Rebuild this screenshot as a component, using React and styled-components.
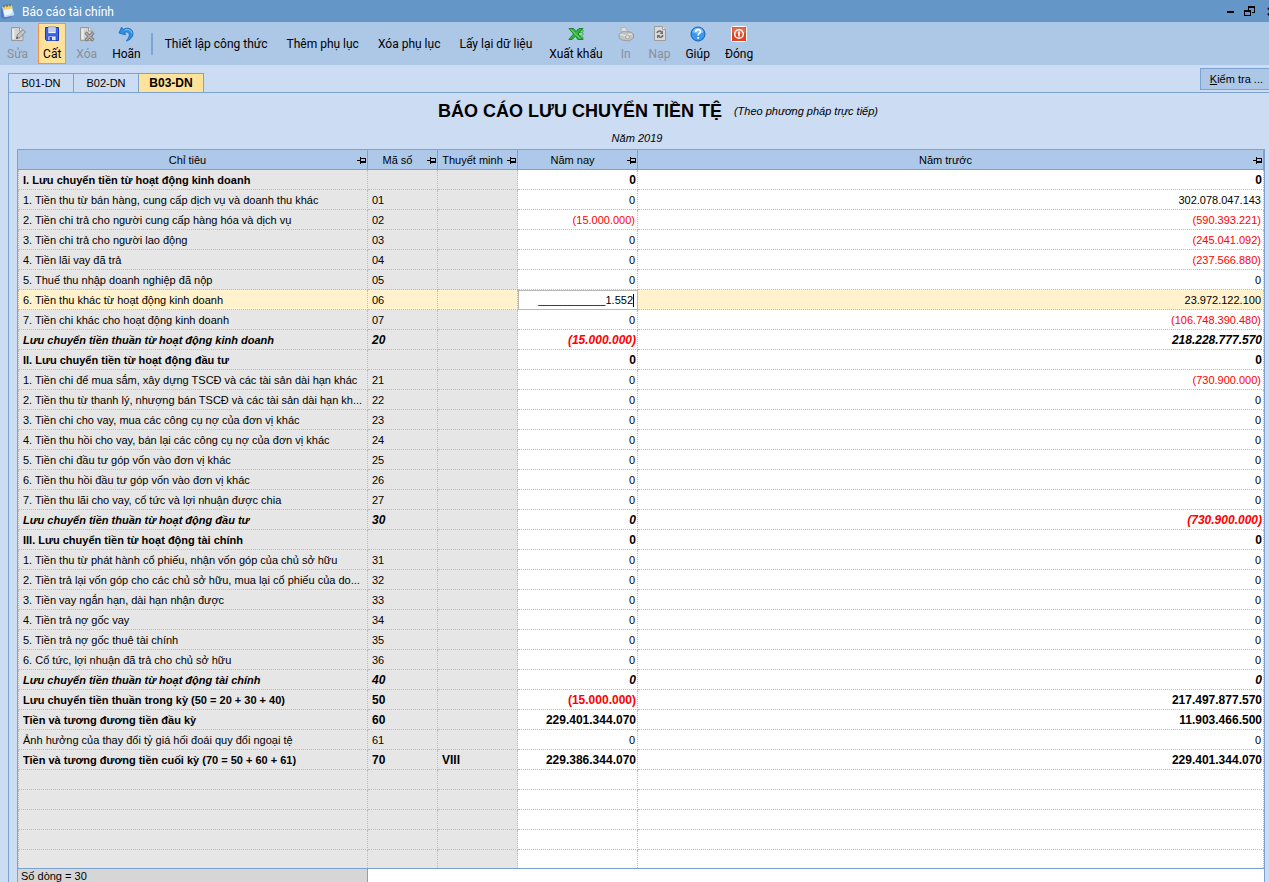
import React, { useState } from 'react';
import styled, { createGlobalStyle, css } from 'styled-components';

const uiFont = 'Roboto, "Noto Sans", sans-serif';
const gridFont = '"Liberation Sans", Arial, sans-serif';

const rows = [
    { name: 'I. Lưu chuyển tiền từ hoạt động kinh doanh', now: '0', prev: '0', kind: 'bold' },
    { name: '1. Tiền thu từ bán hàng, cung cấp dịch vụ và doanh thu khác', code: '01', now: '0', prev: '302.078.047.143' },
    { name: '2. Tiền chi trả cho người cung cấp hàng hóa và dịch vụ', code: '02', now: '(15.000.000)', prev: '(590.393.221)' },
    { name: '3. Tiền chi trả cho người lao động', code: '03', now: '0', prev: '(245.041.092)' },
    { name: '4. Tiền lãi vay đã trả', code: '04', now: '0', prev: '(237.566.880)' },
    { name: '5. Thuế thu nhập doanh nghiệp đã nộp', code: '05', now: '0', prev: '0' },
    { name: '6. Tiền thu khác từ hoạt động kinh doanh', code: '06', now: '___________1.552', prev: '23.972.122.100', editing: true },
    { name: '7. Tiền chi khác cho hoạt động kinh doanh', code: '07', now: '0', prev: '(106.748.390.480)' },
    { name: 'Lưu chuyển tiền thuần từ hoạt động kinh doanh', code: '20', now: '(15.000.000)', prev: '218.228.777.570', kind: 'italic' },
    { name: 'II. Lưu chuyển tiền từ hoạt động đầu tư', now: '0', prev: '0', kind: 'bold' },
    { name: '1. Tiền chi để mua sắm, xây dựng TSCĐ và các tài sản dài hạn khác', code: '21', now: '0', prev: '(730.900.000)' },
    { name: '2. Tiền thu từ thanh lý, nhượng bán TSCĐ và các tài sản dài hạn kh...', code: '22', now: '0', prev: '0' },
    { name: '3. Tiền chi cho vay, mua các công cụ nợ của đơn vị khác', code: '23', now: '0', prev: '0' },
    { name: '4. Tiền thu hồi cho vay, bán lại các công cụ nợ của đơn vị khác', code: '24', now: '0', prev: '0' },
    { name: '5. Tiền chi đầu tư góp vốn vào đơn vị khác', code: '25', now: '0', prev: '0' },
    { name: '6. Tiền thu hồi đầu tư góp vốn vào đơn vị khác', code: '26', now: '0', prev: '0' },
    { name: '7. Tiền thu lãi cho vay, cổ tức và lợi nhuận được chia', code: '27', now: '0', prev: '0' },
    { name: 'Lưu chuyển tiền thuần từ hoạt động đầu tư', code: '30', now: '0', prev: '(730.900.000)', kind: 'italic' },
    { name: 'III. Lưu chuyển tiền từ hoạt động tài chính', now: '0', prev: '0', kind: 'bold' },
    { name: '1. Tiền thu từ phát hành cổ phiếu, nhận vốn góp của chủ sở hữu', code: '31', now: '0', prev: '0' },
    { name: '2. Tiền trả lại vốn góp cho các chủ sở hữu, mua lại cổ phiếu của do...', code: '32', now: '0', prev: '0' },
    { name: '3. Tiền vay ngắn hạn, dài hạn nhận được', code: '33', now: '0', prev: '0' },
    { name: '4. Tiền trả nợ gốc vay', code: '34', now: '0', prev: '0' },
    { name: '5. Tiền trả nợ gốc thuê tài chính', code: '35', now: '0', prev: '0' },
    { name: '6. Cổ tức, lợi nhuận đã trả cho chủ sở hữu', code: '36', now: '0', prev: '0' },
    { name: 'Lưu chuyển tiền thuần từ hoạt động tài chính', code: '40', now: '0', prev: '0', kind: 'italic' },
    { name: 'Lưu chuyển tiền thuần trong kỳ (50 = 20 + 30 + 40)', code: '50', now: '(15.000.000)', prev: '217.497.877.570', kind: 'bold' },
    { name: 'Tiền và tương đương tiền đầu kỳ', code: '60', now: '229.401.344.070', prev: '11.903.466.500', kind: 'bold' },
    { name: 'Ảnh hưởng của thay đổi tỷ giá hối đoái quy đổi ngoại tệ', code: '61', now: '0', prev: '0' },
    { name: 'Tiền và tương đương tiền cuối kỳ (70 = 50 + 60 + 61)', code: '70', note: 'VIII', now: '229.386.344.070', prev: '229.401.344.070', kind: 'bold' },
];

const columns = ['Chỉ tiêu', 'Mã số', 'Thuyết minh', 'Năm nay', 'Năm trước'];
const tabs = ['B01-DN', 'B02-DN', 'B03-DN'];
const blankRows = [1, 2, 3, 4, 5];

const isNegative = (value) => value.startsWith('(');

const AppIcon = () => (
    <svg width="16" height="16" viewBox="0 0 16 16" aria-hidden="true">
        <path d="M1 5l2-1 9 10-8 2-3-2z" fill="#5d6fd0" />
        <path d="M2.500 4l9-1.500 2.500 9.500-9.500 2z" fill="#eaf6fb" stroke="#a9cfe6" strokeWidth=".6" />
        <path d="M2.500 4l9-1.500.8 3-9 1.500z" fill="#f3d266" />
        <path d="M6 12c4 0 6-1 7-4l1 4-9 2z" fill="#b8dcf0" />
        <path d="M4 4.500V2M7 4V1.500M10 3.500V1" stroke="#6c5a38" strokeWidth="1.200" />
    </svg>
)

const GreyPage = () => (
    <path d="M1.500 1.500h8.500l3 3v10H1.500z" fill="#d3d3d3" stroke="#999" />
)

const EditIcon = () => (
    <svg width="16" height="16" viewBox="0 0 16 16" aria-hidden="true">
        <GreyPage />
        <path d="M3.500 3v10" stroke="#ececec" strokeWidth="2" />
        <path d="M9.500 1.500v3.500h3.500" fill="#eee" stroke="#999" />
        <path d="M6.500 12.500l1-4 5.500-5 2.500 2.500-5.500 5.500z" fill="#c4c4c4" stroke="#858585" />
        <path d="M6 13l.8-2.500 1.700 1.700z" fill="#555" />
    </svg>
)

const SaveIcon = () => (
    <svg width="16" height="16" viewBox="0 0 16 16" aria-hidden="true">
        <path d="M1.500 1.500h13v13h-12l-1-1z" fill="#3c68f0" stroke="#1837b4" />
        <path d="M4 1h8v6.500H4z" fill="#f4f6ff" stroke="#2346c8" strokeWidth=".6" />
        <path d="M5 3h6M5 5h6" stroke="#8fa4dc" />
        <path d="M4 10h8v4.500H4z" fill="#dfe4f4" stroke="#1837b4" strokeWidth=".6" />
        <path d="M5.500 11h2.500v3.500H5.500z" fill="#2b4cc4" />
    </svg>
)

const DeleteIcon = () => (
    <svg width="16" height="16" viewBox="0 0 16 16" aria-hidden="true">
        <GreyPage />
        <path d="M3.500 3v10" stroke="#ececec" strokeWidth="2" />
        <path d="M9.500 1.500v3.500h3.500" fill="#eee" stroke="#999" />
        <path d="M6.500 6.500l8 8M14.500 6.500l-8 8" stroke="#7e7e7e" strokeWidth="3.200" />
        <path d="M7 7l7 7M14 7l-7 7" stroke="#b4b4b4" strokeWidth="1.200" />
    </svg>
)

const UndoIcon = () => (
    <svg width="16" height="16" viewBox="0 0 16 16" aria-hidden="true">
        <path d="M3.500 1.200L1 7l6.500 1.800-.9-2.300c2.700-1.100 4.900.2 4.700 2.700-.2 2-1.500 3.500-3 5.800 3.700-1 6.700-3.800 6.700-7.300C15 3 10 .8 5.500 3.300z" fill="#2c91e0" stroke="#1767b4" strokeWidth=".8" />
        <path d="M6.500 4.300c3.500-1.600 7.200 0 7.500 3.200" fill="none" stroke="#83caff" />
    </svg>
)

const ExcelIcon = () => (
    <svg width="16" height="16" viewBox="0 0 16 16" aria-hidden="true">
        <path d="M9 4h6v2h-4zM10 7h5v2h-5zM9 11h6v2H9z" fill="#eaf8e8" stroke="#249b32" strokeWidth=".8" />
        <path d="M1 2.500h4.500L8 5.500l3-3h4L10 8l5 5.500h-4.800L7.600 10l-3.400 3.500H.8L5.600 8z" fill="#2db63b" stroke="#087518" strokeWidth=".8" />
        <path d="M3 3.500l9 9" stroke="#87e17b" />
    </svg>
)

const PrintIcon = () => (
    <svg width="16" height="16" viewBox="0 0 16 16" aria-hidden="true">
        <path d="M2.500 2l5-.8 2.500 5-5.500 2z" fill="#dedede" stroke="#a4a4a4" strokeWidth=".7" />
        <path d="M1 8.500l4-3 7 .5 3.500 2v4l-4.500 3-7-1-3-2z" fill="#c4c4c4" stroke="#929292" strokeWidth=".8" />
        <path d="M2 8.500l5 1 7-1.500" fill="none" stroke="#ededed" />
        <circle cx="9.500" cy="11" r="2" fill="#dedede" stroke="#989898" strokeWidth=".7" />
    </svg>
)

const ReloadIcon = () => (
    <svg width="16" height="16" viewBox="0 0 16 16" aria-hidden="true">
        <path d="M2.500 .5h8l3 3v11h-11z" fill="#dadada" stroke="#9c9c9c" />
        <path d="M10.500 .5v3h3" fill="#f2f2f2" stroke="#9c9c9c" />
        <path d="M5 7c.5-2 3-2.500 4.500-1M11 9c-.5 2.500-3 3-4.500 1.500" fill="none" stroke="#6c6c6c" strokeWidth="1.500" />
        <path d="M11 4.500V8H7.500zM5 12.500V9h3.500z" fill="#6c6c6c" />
    </svg>
)

const HelpIcon = () => (
    <svg width="16" height="16" viewBox="0 0 16 16" aria-hidden="true">
        <circle cx="8" cy="8" r="7" fill="#3b96f0" stroke="#1460b4" />
        <path d="M2.500 6a5.700 5.700 0 0 1 11 0c-2 2-8 2.500-11 0z" fill="#79bdf9" />
        <path d="M5.700 6c0-3 4.800-3 4.800-.3C10.500 7.500 8.200 7.400 8.200 9.500" fill="none" stroke="#fff" strokeWidth="1.700" />
        <path d="M7.300 11h1.800v1.800H7.300z" fill="#fff" />
    </svg>
)

const PowerIcon = () => (
    <svg width="16" height="16" viewBox="0 0 16 16" aria-hidden="true">
        <rect x=".5" y=".5" width="15" height="15" rx="1" fill="#dc4524" stroke="#fff" />
        <path d="M1.500 1.500h13v5c-4 2-9 2-13 0z" fill="#ea6a4a" />
        <circle cx="8" cy="8" r="4.300" fill="none" stroke="#fff" strokeWidth="1.500" />
        <path d="M8 5.500v5" stroke="#fff" strokeWidth="1.700" />
    </svg>
)

const PinIcon = () => (
    <svg width="9" height="8" viewBox="0 0 9 8" shapeRendering="crispEdges" aria-hidden="true">
        <path d="M0 4h3v1H0zM3 1h1v7H3zM4 2h5v5H4zM4 3v2h4V3z" fillRule="evenodd" />
    </svg>
)

const iconActions = [
    { label: 'Sửa', Icon: EditIcon, disabled: true },
    { label: 'Cất', Icon: SaveIcon, active: true },
    { label: 'Xóa', Icon: DeleteIcon, disabled: true },
    { label: 'Hoãn', Icon: UndoIcon },
];
const textActions = ['Thiết lập công thức', 'Thêm phụ lục', 'Xóa phụ lục', 'Lấy lại dữ liệu'];
const moreActions = [
    { label: 'Xuất khẩu', Icon: ExcelIcon },
    { label: 'In', Icon: PrintIcon, disabled: true },
    { label: 'Nạp', Icon: ReloadIcon, disabled: true },
    { label: 'Giúp', Icon: HelpIcon },
    { label: 'Đóng', Icon: PowerIcon },
];

function IconAction({ label, Icon, disabled, active }) {
    return (
        <ToolButton type="button" disabled={disabled} $active={active}>
            <Icon />
            {label}
        </ToolButton>
    )
}

function ReportRow({ row }) {
    const [value, setValue] = useState(row.now);

    return (
        <Row $kind={row.kind} $selected={row.editing}>
            <Cell>{row.name}</Cell>
            <CodeCell>{row.code}</CodeCell>
            <CodeCell>{row.note}</CodeCell>
            {row.editing ? (
                <EditCell>
                    <Editor>
                        <AmountInput
                            aria-label={row.name}
                            value={value}
                            onChange={(e) => setValue(e.target.value)}
                        />
                        <Caret />
                    </Editor>
                </EditCell>
            ) : (
                <Amount $negative={isNegative(row.now)}>{row.now}</Amount>
            )}
            <Amount $negative={isNegative(row.prev)}>{row.prev}</Amount>
        </Row>
    )
}

function App() {
    const [tab, setTab] = useState('B03-DN');

    return (
        <Window>
            <GlobalStyle />
            <TitleBar>
                <AppIcon />
                <WindowTitle>Báo cáo tài chính</WindowTitle>
                <WindowControls>
                    <ControlButton type="button" aria-label="Minimize">
                        <svg width="11" height="11" viewBox="0 0 11 11" shapeRendering="crispEdges">
                            <path d="M2 5h7v2H2z" />
                        </svg>
                    </ControlButton>
                    <ControlButton type="button" aria-label="Restore">
                        <svg width="11" height="11" viewBox="0 0 11 11" shapeRendering="crispEdges">
                            <path d="M4 0h7v7H8V6h2V2H5v2H4zM0 4h7v6H0zM1 6v3h5V6z" fillRule="evenodd" />
                        </svg>
                    </ControlButton>
                    <CloseButton type="button" aria-label="Close">
                        <svg width="11" height="11" viewBox="0 0 11 11">
                            <path d="M2 2l7 7M9 2l-7 7" stroke="#000" strokeWidth="2" />
                        </svg>
                    </CloseButton>
                </WindowControls>
            </TitleBar>

            <Toolbar>
                {iconActions.map((action) => <IconAction key={action.label} {...action} />)}
                <Separator />
                {textActions.map((label) => <TextButton key={label} type="button">{label}</TextButton>)}
                {moreActions.map((action) => <IconAction key={action.label} {...action} />)}
            </Toolbar>

            <TabStrip>
                <Tabs role="tablist">
                    {tabs.map((name) => (
                        <Tab
                            key={name}
                            type="button"
                            role="tab"
                            aria-selected={tab === name}
                            $active={tab === name}
                            onClick={() => setTab(name)}
                        >
                            {name}
                        </Tab>
                    ))}
                </Tabs>
                <CheckButton type="button"><u>K</u>iểm tra ...</CheckButton>
            </TabStrip>

            <Panel>
                <Heading>
                    <HeadingLine>
                        <Title>BÁO CÁO LƯU CHUYỂN TIỀN TỆ</Title>
                        <Method>(Theo phương pháp trực tiếp)</Method>
                    </HeadingLine>
                    <Year>Năm 2019</Year>
                </Heading>

                <Grid>
                    <GridBody>
                        <Table>
                            <colgroup>
                                <Col $width="350px" />
                                <Col $width="70px" />
                                <Col $width="80px" />
                                <Col $width="120px" />
                                <Col />
                            </colgroup>
                            <thead>
                                <tr>
                                    {columns.map((name) => (
                                        <HeadCell key={name} scope="col">
                                            <HeadContent>
                                                <HeadLabel>{name}</HeadLabel>
                                                <PinIcon />
                                            </HeadContent>
                                        </HeadCell>
                                    ))}
                                </tr>
                            </thead>
                            <tbody>
                                {rows.map((row) => <ReportRow key={row.name} row={row} />)}
                                {blankRows.map((n) => (
                                    <Row key={n}>
                                        <Cell />
                                        <Cell />
                                        <Cell />
                                        <Amount />
                                        <Amount />
                                    </Row>
                                ))}
                            </tbody>
                        </Table>
                    </GridBody>
                    <GridFooter>
                        <RowCount>Số dòng = {rows.length}</RowCount>
                    </GridFooter>
                </Grid>
            </Panel>
        </Window>
    )
}

export default App

const GlobalStyle = createGlobalStyle`
* {
    box-sizing: border-box;
}
body {
    margin: 0;
    overflow: hidden;
    color: #000;
    background: #ccdcf2;
}
button {
    margin: 0;
    color: inherit;
    cursor: pointer;
    white-space: nowrap;
}
`

const Window = styled.div`
display: flex;
flex-direction: column;
height: 100vh;
overflow: hidden;
font: 11px ${gridFont};
`

const TitleBar = styled.header`
display: flex;
flex: none;
align-items: center;
height: 22px;
background: #6496c8;
overflow: hidden;
`

const WindowTitle = styled.div`
flex: 1;
padding: 2px 0 0 6px;
color: #fff;
font: 12px/20px ${uiFont};
`

const WindowControls = styled.div`
display: flex;
gap: 8px;
margin-right: -8px;
`

const ControlButton = styled.button`
display: flex;
padding: 0;
border: 0;
background: none;
`

const CloseButton = styled(ControlButton)`
padding-left: 3px;
`

const Toolbar = styled.nav`
display: flex;
flex: none;
align-items: center;
gap: 5px;
height: 43px;
padding: 0 2px;
background: #adc7e7;
font: 12px/18px ${uiFont};
`

const ToolButton = styled.button`
display: flex;
flex-direction: column;
align-items: center;
justify-content: space-between;
height: 41px;
padding: 2px 4px 0;
border: 1px solid ${(props) => (props.$active ? '#f0924c' : 'transparent')};
background: ${(props) => (props.$active ? '#ffe29a' : 'none')};
font: inherit;

&:disabled {
    color: #8a8f98;
}
`

const TextButton = styled.button`
padding: 0 7px;
border: 0;
background: none;
font: inherit;
`

const Separator = styled.div`
width: 2px;
height: 22px;
background: #7aa6d8;
`

const TabStrip = styled.div`
display: flex;
flex: none;
align-items: flex-end;
justify-content: space-between;
height: 27px;
padding-left: 8px;
`

const Tabs = styled.div`
display: flex;
border-left: 1px solid #7ba2d0;
`

const Tab = styled.button`
width: 65px;
height: 19px;
padding: 0;
border: solid #7ba2d0;
border-width: 1px 1px 0 0;
background: ${(props) => (props.$active ? '#ffe29a' : '#ccdcf2')};
font: ${(props) => (props.$active ? 'bold 12px' : '11px')} ${gridFont};
`

const CheckButton = styled.button`
height: 22px;
margin-bottom: 2px;
padding: 0 6px 0 9px;
border: 1px solid #7ba2d0;
border-right: 0;
background: #adc7e7;
font: 11px ${gridFont};
`

const Panel = styled.main`
display: flex;
flex: 1;
flex-direction: column;
min-height: 0;
margin-left: 8px;
padding: 0 4px 0 8px;
border: solid #7ba2d0;
border-width: 1px 0 0 1px;
`

const Heading = styled.div`
flex: none;
height: 56px;
padding: 7px 8px 0 0;
text-align: center;
`

const HeadingLine = styled.div`
display: flex;
align-items: center;
justify-content: center;
gap: 12px;
padding-left: 42px;
`

const Title = styled.h1`
margin: 0;
font-size: 18px;
line-height: 22px;
`

const Method = styled.span`
font-size: 11px;
font-style: italic;
`

const Year = styled.div`
font-style: italic;
line-height: 16px;
margin-top: 8px;
`

const Grid = styled.section`
display: flex;
flex: 1;
flex-direction: column;
min-height: 0;
border: solid #7ba2d0;
border-width: 1px 1px 0 1px;
`

const GridBody = styled.div`
flex: 1;
min-height: 0;
overflow: hidden;
background: #fff;
`

const Table = styled.table`
width: 100%;
border-spacing: 0;
table-layout: fixed;
`

const Col = styled.col`
width: ${(props) => props.$width || 'auto'};
`

const HeadCell = styled.th`
height: 20px;
padding: 0 1px 0 0;
border-right: 1px solid #7ba2d0;
border-bottom: 1px solid #7ba2d0;
background: #adc8e8;
font-size: 11px;
font-weight: normal;
`

const HeadContent = styled.div`
display: flex;
align-items: center;
`

const HeadLabel = styled.span`
flex: 1;
white-space: nowrap;
`

const cellBase = css`
height: 20px;
padding: 2px 2px 0 4px;
border-right: 1px dotted #bcbcbc;
border-bottom: 1px dotted #bcbcbc;
line-height: 17px;
white-space: nowrap;
`

const Cell = styled.td`
${cellBase}
background: #e6e6e6;
overflow: hidden;
text-overflow: ellipsis;

&:first-child {
    border-left: 1px dotted #bcbcbc;
}
`

const CodeCell = styled(Cell)``

const Amount = styled.td`
${cellBase}
text-align: right;
color: ${(props) => (props.$negative ? '#ff0000' : 'inherit')};
`

const EditCell = styled.td`
height: 20px;
padding: 0;
`

const Editor = styled.div`
display: flex;
align-items: center;
height: 20px;
padding-right: 3px;
border: 1px solid #b8b8b8;
background: #fff;
`

const AmountInput = styled.input`
flex: 1;
min-width: 0;
padding: 0;
border: 0;
outline: 0;
background: none;
font: inherit;
text-align: right;
`

const Caret = styled.span`
width: 1px;
height: 13px;
background: #000;
`

const Row = styled.tr`
font-weight: ${(props) => (props.$kind ? 'bold' : 'normal')};
font-style: ${(props) => (props.$kind === 'italic' ? 'italic' : 'normal')};

${(props) => props.$kind && css`
    ${CodeCell}, ${Amount} {
        font-size: 12px;
    }
    ${Amount} {
        padding-right: 1px;
    }
`}

${(props) => props.$selected && css`
    ${Cell}, ${Amount} {
        background: #fff2cc;
    }
`}
`

const GridFooter = styled.footer`
display: flex;
flex: none;
height: 14px;
border-top: 1px solid #7ba2d0;
background: #fff;
overflow: hidden;
`

const RowCount = styled.div`
width: 350px;
padding-left: 3px;
border-right: 1px solid #7ba2d0;
background: #d6d6d6;
line-height: 15px;
`
